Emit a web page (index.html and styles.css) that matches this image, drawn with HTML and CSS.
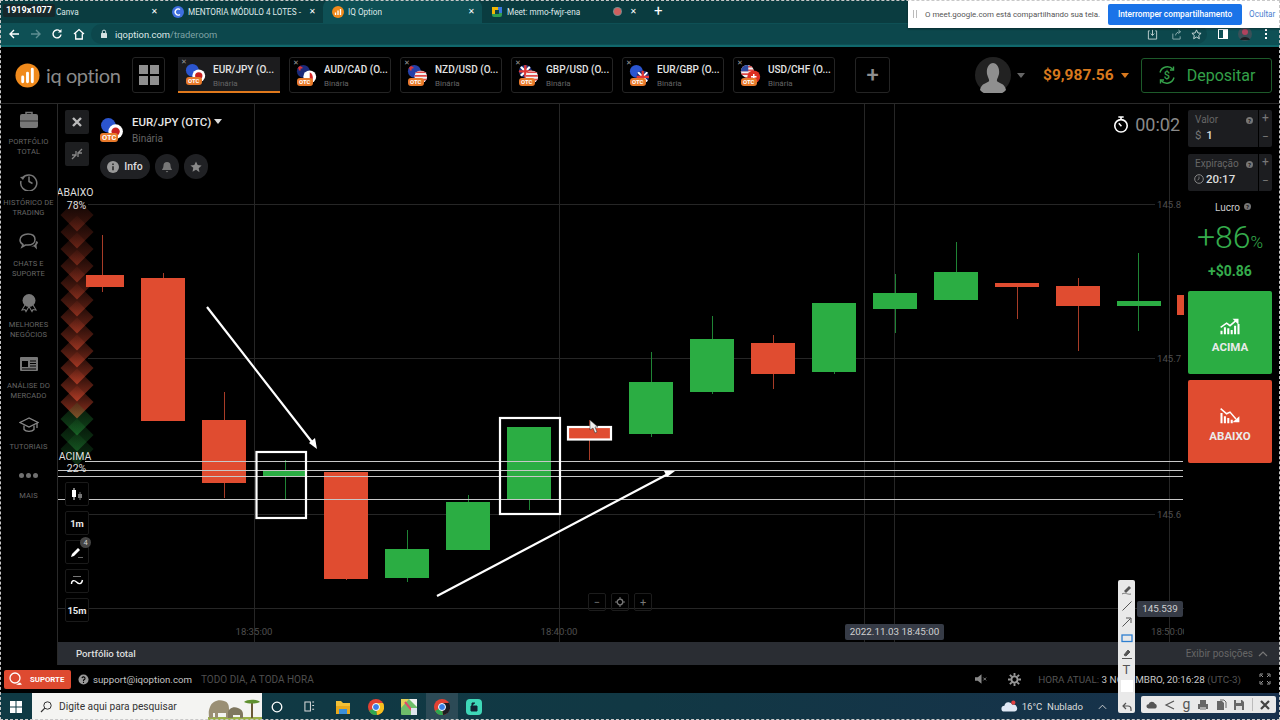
FILE: index.html
```html
<!DOCTYPE html>
<html lang="pt-BR">
<head>
<meta charset="utf-8">
<title>IQ Option</title>
<link rel="stylesheet" href="styles.css">
</head>
<body>
<svg class="defs" width="0" height="0" aria-hidden="true">
  <defs>
    <clipPath id="cb"><circle cx="8" cy="8" r="7"/></clipPath>
    <clipPath id="cf"><circle cx="15" cy="14" r="7"/></clipPath>
    <linearGradient id="gr-red" x1="0" y1="0" x2="0" y2="1"><stop offset="0" stop-color="#e04c30" stop-opacity=".08"/><stop offset="1" stop-color="#e04c30" stop-opacity=".68"/></linearGradient>
    <linearGradient id="gr-green" x1="0" y1="0" x2="0" y2="1"><stop offset="0" stop-color="#2bad43" stop-opacity=".1"/><stop offset="1" stop-color="#2bad43" stop-opacity=".42"/></linearGradient>
    <symbol id="b-eu" viewBox="0 0 24 24"><circle cx="8" cy="8" r="7" fill="#2b55cf"/></symbol>
    <symbol id="b-au" viewBox="0 0 24 24"><g clip-path="url(#cb)"><rect width="16" height="16" fill="#1b2a7a"/><path d="M1 4h6M4 1v6" stroke="#e03636" stroke-width="2"/><circle cx="10" cy="11" r="1" fill="#fff"/></g></symbol>
    <symbol id="b-nz" viewBox="0 0 24 24"><g clip-path="url(#cb)"><rect width="16" height="16" fill="#2440a8"/><path d="M1 4h6M4 1v6" stroke="#e03636" stroke-width="2"/></g></symbol>
    <symbol id="b-gb" viewBox="0 0 24 24"><g clip-path="url(#cb)"><rect width="16" height="16" fill="#24357f"/><path d="M0 0l16 16M16 0L0 16" stroke="#fff" stroke-width="2.4"/><path d="M8 0v16M0 8h16" stroke="#e03636" stroke-width="2.6"/></g></symbol>
    <symbol id="b-us" viewBox="0 0 24 24"><g clip-path="url(#cb)"><rect width="16" height="16" fill="#f0f0f0"/><path d="M0 3h16M0 7h16M0 11h16M0 15h16" stroke="#e04848" stroke-width="1.8"/><rect width="9" height="8" fill="#2d4aa0"/></g></symbol>
    <symbol id="f-jp" viewBox="0 0 24 24"><circle cx="15" cy="14" r="7" fill="#fff"/><circle cx="15" cy="14" r="4" fill="#c92020"/></symbol>
    <symbol id="f-ca" viewBox="0 0 24 24"><circle cx="15" cy="14" r="7" fill="#fff"/><path d="M15 9a7 7 0 0 1 0 12z" fill="#d92626"/></symbol>
    <symbol id="f-us" viewBox="0 0 24 24"><g clip-path="url(#cf)"><rect x="8" y="7" width="14" height="14" fill="#f0f0f0"/><path d="M8 9h14M8 13h14M8 17h14" stroke="#e04848" stroke-width="1.8"/></g></symbol>
    <symbol id="f-gb" viewBox="0 0 24 24"><g clip-path="url(#cf)"><rect x="8" y="7" width="14" height="14" fill="#24357f"/><path d="M8 7l14 14M22 7L8 21" stroke="#fff" stroke-width="2"/><path d="M15 7v14M8 14h14" stroke="#e03636" stroke-width="2.4"/></g></symbol>
    <symbol id="f-ch" viewBox="0 0 24 24"><circle cx="15" cy="14" r="7" fill="#dc2f22"/><path d="M15 11v6M12 14h6" stroke="#fff" stroke-width="1.6"/></symbol>
    <polygon id="dia" points="0,-16.5 16.5,0 0,16.5 -16.5,0"/>
  </defs>
</svg>

<div class="browser">
  <div class="tabstrip">
    <div class="btab btab-a"><span class="btab-title">Canva</span><span class="btab-x">✕</span></div>
    <div class="btab btab-b">
      <svg class="fav" viewBox="0 0 12 12"><circle cx="6" cy="6" r="6" fill="#3f6fe0"/><path d="M8 3.6A3 3 0 1 0 8 8.4" fill="none" stroke="#fff" stroke-width="1.3"/></svg>
      <span class="btab-title">MENTORIA MÓDULO 4 LOTES -</span><span class="btab-x">✕</span>
    </div>
    <div class="btab btab-c btab-on">
      <svg class="fav" viewBox="0 0 12 12"><circle cx="6" cy="6" r="6" fill="#f08a1c"/><path d="M3.5 6.5v2.5M6 4.5v4.5M8.5 3v6" stroke="#fff" stroke-width="1.3"/></svg>
      <span class="btab-title">IQ Option</span><span class="btab-x">✕</span>
    </div>
    <div class="btab btab-d">
      <svg class="fav" viewBox="0 0 12 12"><rect x="1" y="1" width="10" height="10" rx="2" fill="#2f9e4f"/><path d="M1 1h6v3H4v4H1z" fill="#f2b705"/><path d="M7 1h4v6H8V4H7z" fill="#3a78e0"/><rect x="4" y="4" width="4" height="4" fill="#0d4347"/></svg>
      <span class="btab-title">Meet: mmo-fwjr-ena</span><i class="rec"></i><span class="btab-x">✕</span>
    </div>
    <span class="newtab">+</span>
  </div>
  <div class="addrbar">
    <svg class="nav" viewBox="0 0 12 12"><path d="M11 6H2M6 2L2 6l4 4" fill="none" stroke="#fff" stroke-width="1.4"/></svg>
    <svg class="nav nav-dim" viewBox="0 0 12 12"><path d="M1 6h9M6 2l4 4-4 4" fill="none" stroke="#5f8f92" stroke-width="1.4"/></svg>
    <svg class="nav" viewBox="0 0 12 12"><path d="M10 6.500A4 4 0 1 1 8.800 3" fill="none" stroke="#fff" stroke-width="1.4"/><path d="M10.500 1v3.500H7z" fill="#fff"/></svg>
    <svg class="nav" viewBox="0 0 12 12"><path d="M1 6l5-4.500L11 6M2.700 5.500V11h6.600V5.500" fill="none" stroke="#fff" stroke-width="1.3"/></svg>
    <div class="omni">
      <svg class="lock" viewBox="0 0 8 10"><rect x="1" y="4" width="6" height="5" rx=".6" fill="#d4e2e2"/><path d="M2.300 4V2.800a1.700 1.700 0 0 1 3.400 0V4" fill="none" stroke="#d4e2e2"/></svg>
      <span class="url">iqoption.com<span class="url-dim">/traderoom</span></span>
      <div class="omni-right">
        <svg class="act act-first" viewBox="0 0 12 12"><path d="M3 2H1.500v9h9V2H9M6 1v6M4 5l2 2 2-2" fill="none" stroke="#c4d4d4"/></svg>
        <svg class="act" viewBox="0 0 12 12"><path d="M2 5v6h8V8M5 7c0-2 2-4 5-4M8 1l2.500 2L8 5" fill="none" stroke="#8fb0b2"/></svg>
        <svg class="act" viewBox="0 0 12 12"><path d="M6 1l1.500 3.300 3.500.4-2.600 2.400.7 3.500L6 8.800 2.900 10.600l.7-3.500L1 4.700l3.500-.4z" fill="none" stroke="#d4e2e2"/></svg>
      </div>
    </div>
    <svg class="panel-ic" viewBox="0 0 10 10"><rect x=".5" y=".5" width="9" height="9" fill="none" stroke="#fff"/><rect x="5" y="1" width="4" height="8" fill="#fff"/></svg>
    <svg class="prof" viewBox="0 0 14 14"><circle cx="7" cy="7" r="7" fill="#3a5058"/><circle cx="7" cy="5" r="3" fill="#b0435e"/><path d="M2 13c1-4 9-4 10 0" fill="#1b2024"/></svg>
    <span class="kebab"><i></i><i></i><i></i></span>
  </div>
</div>

<header class="apphead">
  <div class="logo">
    <svg class="logo-mark" viewBox="0 0 26 26"><circle cx="13" cy="13" r="12.500" fill="#f08a1c"/><path d="M8 14.500v5M13 10.500v9M18 6.500v13" stroke="#fff" stroke-width="3" stroke-linecap="round"/></svg>
    <span class="logo-text">iq option</span>
  </div>
  <button class="hbtn grid-btn"><i></i><i></i><i></i><i></i></button>
  <nav class="assets">
    <div class="atab atab-on"><span class="atab-x">✕</span><span class="flag"><svg viewBox="0 0 24 24"><use href="#b-eu"/><use href="#f-jp"/></svg><b>OTC</b></span><span class="atab-t"><strong>EUR/JPY (O...</strong><small>Binária</small></span></div>
    <div class="atab"><span class="atab-x">✕</span><span class="flag"><svg viewBox="0 0 24 24"><use href="#b-au"/><use href="#f-ca"/></svg><b>OTC</b></span><span class="atab-t"><strong>AUD/CAD (O...</strong><small>Binária</small></span></div>
    <div class="atab"><span class="atab-x">✕</span><span class="flag"><svg viewBox="0 0 24 24"><use href="#b-nz"/><use href="#f-us"/></svg><b>OTC</b></span><span class="atab-t"><strong>NZD/USD (O...</strong><small>Binária</small></span></div>
    <div class="atab"><span class="atab-x">✕</span><span class="flag"><svg viewBox="0 0 24 24"><use href="#b-gb"/><use href="#f-us"/></svg><b>OTC</b></span><span class="atab-t"><strong>GBP/USD (O...</strong><small>Binária</small></span></div>
    <div class="atab"><span class="atab-x">✕</span><span class="flag"><svg viewBox="0 0 24 24"><use href="#b-eu"/><use href="#f-gb"/></svg><b>OTC</b></span><span class="atab-t"><strong>EUR/GBP (O...</strong><small>Binária</small></span></div>
    <div class="atab"><span class="atab-x">✕</span><span class="flag"><svg viewBox="0 0 24 24"><use href="#b-us"/><use href="#f-ch"/></svg><b>OTC</b></span><span class="atab-t"><strong>USD/CHF (O...</strong><small>Binária</small></span></div>
  </nav>
  <button class="hbtn plus-btn">+</button>
  <svg class="avatar" viewBox="0 0 36 36"><circle cx="18" cy="18" r="18" fill="#222"/><path d="M5 33c1-7 8-7 9-9 .500-1.500-1-3-2-7-1-7 3-11 6-11s7 4 6 11c-1 4-2.500 5.500-2 7 1 2 8 2 9 9a18 18 0 0 1-26 0z" fill="#8f8f8f"/></svg>
  <i class="caret caret-gray"></i>
  <span class="balance">$9,987.56</span>
  <i class="caret caret-org"></i>
  <button class="deposit">
    <svg viewBox="0 0 20 20"><path d="M3 7.500A7.500 7.500 0 0 1 16 4.500M17 12.500A7.500 7.500 0 0 1 4 15.500" fill="none" stroke="#35a04a" stroke-width="1.400"/><path d="M16.500 1.500v3.500H13M3.500 18.500V15H7" fill="none" stroke="#35a04a" stroke-width="1.400"/><text x="10" y="14" text-anchor="middle" class="dep-s">$</text></svg>
    <span>Depositar</span>
  </button>
</header>

<main class="room">
  <aside class="side">
    <div class="side-item">
      <svg viewBox="0 0 20 20"><path d="M7 4V2.500h6V4" fill="none" stroke="#777" stroke-width="1.500"/><rect x="1" y="4" width="18" height="14" rx="2" fill="#777"/><path d="M1 11h18" stroke="#000" stroke-width=".6"/></svg>
      <span>Portfólio total</span>
    </div>
    <div class="side-item">
      <svg viewBox="0 0 20 20"><path d="M3.500 7A8 8 0 1 1 2 10" fill="none" stroke="#777" stroke-width="1.500"/><path d="M1 6l3 3 2-3.500z" fill="#777"/><path d="M10 5.500V10.500l3.500 2" fill="none" stroke="#777" stroke-width="1.500"/></svg>
      <span>Histórico de trading</span>
    </div>
    <div class="side-item">
      <svg viewBox="0 0 20 20"><path d="M9 2C4.500 2 1 4.500 1 8c0 2 1.200 3.500 3 4.500L3 15l3.500-2H9c4 0 7-2 7-5.500S13.500 2 9 2z" fill="none" stroke="#777" stroke-width="1.500"/><path d="M12 14.500l3 0 3 3-.5-4.500c1-1 1.500-2 1.500-3l-2-1c0 3-2 5-5 5.500z" fill="#777"/></svg>
      <span>Chats e suporte</span>
    </div>
    <div class="side-item">
      <svg viewBox="0 0 20 20"><path d="M6 12l-3 5 3-.5 1 2 3-5 3 5 1-2 3 .5-3-5" fill="none" stroke="#777" stroke-width="1.100"/><circle cx="10" cy="7.500" r="6.500" fill="#777"/></svg>
      <span>Melhores negócios</span>
    </div>
    <div class="side-item">
      <svg viewBox="0 0 20 20"><rect x="1" y="3" width="18" height="14" rx="1" fill="#777"/><rect x="3" y="7" width="6" height="6" fill="#000"/><path d="M11 7h6M11 9.500h6M11 12h6M3 15h14" stroke="#000"/></svg>
      <span>Análise do mercado</span>
    </div>
    <div class="side-item">
      <svg viewBox="0 0 20 20"><path d="M10 3L1 7.500l9 4.500 9-4.500z" fill="none" stroke="#888" stroke-width="1.300"/><path d="M5 10.500v4c2 2.500 8 2.500 10 0v-4M18 8v5" fill="none" stroke="#888" stroke-width="1.300"/></svg>
      <span>Tutoriais</span>
    </div>
    <div class="side-item side-more">
      <span class="dots"><i></i><i></i><i></i></span>
      <span>Mais</span>
    </div>
  </aside>

  <section class="chart">
    <svg class="plot" viewBox="58 104 1126 538" width="1126" height="538">
      <g class="grid">
        <path d="M88 204.500H1155M88 358.500H1155M88 514.500H1155M58 608.500H1184"/>
        <path d="M254.500 104V642M559.500 104V642M864.500 104V642M894.500 104V642M1169.500 104V642"/>
      </g>
      <g class="candle-up">
        <path class="wick" d="M285.500 460V500M407.500 530V582M468.500 495V502M529.500 500V510M651.500 352V437M712.500 316V394M834.500 372V374M895.500 274V333M956.500 242V273M1138.500 253V331"/>
        <rect x="263" y="471" width="44" height="5"/><rect x="385" y="549" width="44" height="29"/><rect x="446" y="502" width="44" height="48"/><rect x="507" y="427" width="44" height="73"/><rect x="629" y="382" width="44" height="52"/><rect x="690" y="339" width="44" height="53"/><rect x="812" y="303" width="44" height="69"/><rect x="873" y="293" width="44" height="16"/><rect x="934" y="272" width="44" height="28"/><rect x="1117" y="301" width="44" height="5"/>
      </g>
      <g class="candle-dn">
        <path class="wick" d="M102.500 235V292M163.500 273V279M224.500 392V498M346.500 579V580M589.500 420V460M773.500 335V389M1017.500 283V319M1078.500 278V351"/>
        <rect x="86" y="275" width="38" height="12"/><rect x="141" y="278" width="44" height="143"/><rect x="202" y="420" width="44" height="63"/><rect x="324" y="472" width="44" height="107"/><rect x="569" y="428" width="41" height="11"/><rect x="751" y="343" width="44" height="31"/><rect x="995" y="283" width="44" height="4"/><rect x="1056" y="286" width="44" height="20"/><rect x="1177" y="295" width="7" height="20"/>
      </g>
      <g class="sent-dn">
        <use href="#dia" x="77" y="215" opacity=".45"/><use href="#dia" x="77" y="232" opacity=".5"/><use href="#dia" x="77" y="249" opacity=".55"/><use href="#dia" x="77" y="266" opacity=".6"/><use href="#dia" x="77" y="283" opacity=".65"/><use href="#dia" x="77" y="300" opacity=".7"/><use href="#dia" x="77" y="317" opacity=".75"/><use href="#dia" x="77" y="334" opacity=".8"/><use href="#dia" x="77" y="351" opacity=".85"/><use href="#dia" x="77" y="368" opacity=".9"/><use href="#dia" x="77" y="385" opacity=".95"/><use href="#dia" x="77" y="402"/>
      </g>
      <g class="sent-up">
        <use href="#dia" x="77" y="419"/><use href="#dia" x="77" y="435" opacity=".85"/><use href="#dia" x="77" y="449" opacity=".7"/>
      </g>
      <g class="marks">
        <path d="M85 461.500H1183M58 470.500H1183M58 476.500H1183M58 499.500H1183" class="level"/>
        <rect x="256.500" y="452" width="49.500" height="66"/>
        <rect x="500" y="418" width="60" height="96"/>
        <rect x="568" y="427" width="43" height="12.500"/>
        <path d="M207 307L312 442M437 596L668 474"/>
        <polygon class="tip" points="317,449 309,443 315,438"/>
        <polygon class="tip" points="675,471 664,471 667,477"/>
      </g>
      <polygon class="cursor" points="590,420 590,430 593,428 595,433 597,432 595,427 598,427"/>
      <g class="axis">
        <text x="1157" y="208">145.8</text><text x="1157" y="362">145.7</text><text x="1157" y="518">145.6</text>
        <text x="254" y="635" text-anchor="middle">18:35:00</text><text x="559" y="635" text-anchor="middle">18:40:00</text><text x="1151" y="635">18:50:00</text>
      </g>
      <g class="pct">
        <text x="75" y="196">ABAIXO</text><text x="76.500" y="209">78%</text><text x="75" y="460">ACIMA</text><text x="76.500" y="472">22%</text>
      </g>
    </svg>

    <div class="tools-top">
      <button class="sq"><svg viewBox="0 0 12 12"><path d="M2 2l8 8M10 2l-8 8" stroke="#bbb" stroke-width="2.400"/></svg></button>
      <button class="sq"><svg viewBox="0 0 12 12"><path d="M1 11l4-4M7 5l4-4M5 3v4H1M7 9V5h4" fill="none" stroke="#888" stroke-width="1.300"/></svg></button>
    </div>

    <div class="asset">
      <div class="asset-row">
        <span class="flag flag-lg"><svg viewBox="0 0 24 24"><use href="#b-eu"/><use href="#f-jp"/></svg><b>OTC</b></span>
        <div class="asset-t"><strong>EUR/JPY (OTC)<i class="caret caret-w"></i></strong><small>Binária</small></div>
      </div>
      <div class="pills">
        <span class="pill pill-info"><svg viewBox="0 0 12 12"><circle cx="6" cy="6" r="6" fill="#999"/><path d="M6 5.200v4M6 2.500v1.400" stroke="#222" stroke-width="1.500"/></svg>Info</span>
        <span class="pill pill-ic"><svg viewBox="0 0 12 12"><path d="M6 1a3.500 3.500 0 0 1 3.500 3.500c0 3 1.500 3.500 1.500 4.500H1c0-1 1.500-1.500 1.500-4.500A3.500 3.500 0 0 1 6 1zM4.700 10h2.600L6 11.500z" fill="#777"/></svg></span>
        <span class="pill pill-ic"><svg viewBox="0 0 12 12"><path d="M6 .5l1.700 3.600 3.900.5-2.900 2.700.8 3.900L6 8.800l-3.500 1.900.8-3.900L.4 4.600l3.900-.5z" fill="#888"/></svg></span>
      </div>
    </div>

    <div class="timer">
      <svg viewBox="0 0 18 20"><path d="M6 1.500h6M9 2v2" stroke="#fff" stroke-width="1.800"/><circle cx="9" cy="11.500" r="7" fill="none" stroke="#fff" stroke-width="1.800"/><path d="M6.500 8.500L9.500 12" stroke="#fff" stroke-width="1.600"/></svg>
      <span>00:02</span>
    </div>

    <div class="tools-bottom">
      <button class="sq sq-line"><svg viewBox="0 0 14 14"><path d="M4 1v12" stroke="#fff"/><rect x="2" y="3" width="4" height="7" fill="#fff"/><path d="M10 5v8" stroke="#777"/><rect x="8" y="7" width="4" height="4" fill="#777"/></svg></button>
      <button class="sq sq-line sq-txt">1m</button>
      <button class="sq sq-line sq-badge"><svg viewBox="0 0 14 14"><path d="M1 12l1-3 6-6 2 2-6 6z" fill="#fff"/><path d="M8 12.500h5" stroke="#666"/></svg><em>4</em></button>
      <button class="sq sq-line"><svg viewBox="0 0 14 14"><path d="M3 2.500h8" stroke="#777"/><path d="M1.500 10c0-4 3-4 5-2s5 3 6-2" fill="none" stroke="#fff" stroke-width="1.400"/></svg></button>
      <button class="sq sq-line sq-txt">15m</button>
    </div>

    <div class="zoomctl"><span>−</span><span><svg viewBox="0 0 10 10"><circle cx="5" cy="5" r="2.800" fill="none" stroke="#777" stroke-width="1.300"/><path d="M5 0v2M5 8v2M0 5h2M8 5h2" stroke="#777"/></svg></span><span>+</span></div>
    <span class="chip chip-date">2022.11.03 18:45:00</span>
    <span class="chip chip-price">145.539</span>
  </section>

  <aside class="trade">
    <div class="field">
      <div class="field-main"><div class="field-l">Valor<i class="hint">?</i></div><div class="field-v"><span class="dim">$</span> 1</div></div>
      <div class="step"><span>+</span><span>−</span></div>
    </div>
    <div class="field">
      <div class="field-main"><div class="field-l">Expiração<i class="hint">?</i></div><div class="field-v field-v-t"><svg viewBox="0 0 10 10"><circle cx="5" cy="5" r="4.300" fill="none" stroke="#888"/><path d="M5 2.500V5l-1.500 1" fill="none" stroke="#888" stroke-width=".8"/></svg>20:17</div></div>
      <div class="step"><span>+</span><span>−</span></div>
    </div>
    <div class="lucro">Lucro<i class="hint">?</i></div>
    <div class="pay">+86<small>%</small></div>
    <div class="gain">+$0.86</div>
    <button class="call">
      <svg viewBox="0 0 24 20"><path d="M1 11L8 6l4 3 7-6" fill="none" stroke="#fff" stroke-width="1.800"/><path d="M15 1h7v7z" fill="#fff"/><path d="M2 19v-4M6 19v-8M10 19v-7M14 19v-5M18 19V9M22 19V7" stroke="#fff" stroke-width="2.400"/></svg>
      <span>ACIMA</span>
    </button>
    <button class="put">
      <svg viewBox="0 0 24 20"><path d="M1 2l7 6 4-2 7 8" fill="none" stroke="#fff" stroke-width="1.800"/><path d="M15 18h8v-7z" fill="#fff"/><path d="M2 19V7M6 19v-8M10 19v-6M14 19v-4" stroke="#fff" stroke-width="2.400"/></svg>
      <span>ABAIXO</span>
    </button>
  </aside>

  <div class="portfolio">
    <strong>Portfólio total</strong>
    <span class="expos">Exibir posições <svg viewBox="0 0 10 6"><path d="M1 5l4-4 4 4" fill="none" stroke="#777" stroke-width="1.200"/></svg></span>
  </div>
</main>

<footer class="foot">
  <button class="support">
    <svg viewBox="0 0 14 14"><circle cx="6" cy="6" r="5" fill="none" stroke="#fff" stroke-width="1.300"/><path d="M7 12.500c2 .5 4 .5 6 0l-2-2z" fill="#fff"/></svg>
    <span>SUPORTE</span>
  </button>
  <svg class="q" viewBox="0 0 12 12"><circle cx="6" cy="6" r="5.500" fill="#999"/><path d="M4.300 4.500A1.700 1.700 0 1 1 6 6.500V7.500M6 8.500v1.300" fill="none" stroke="#000" stroke-width="1.200"/></svg>
  <span class="mail">support@iqoption.com</span>
  <span class="allday">TODO DIA, A TODA HORA</span>
  <div class="foot-right">
    <svg class="mute" viewBox="0 0 14 12"><path d="M0 4h3l4-3v10L3 8H0z" fill="#888"/><path d="M9 4.500l3 3M12 4.500l-3 3" stroke="#888"/></svg>
    <svg class="gear" viewBox="0 0 14 14"><circle cx="7" cy="7" r="3.300" fill="none" stroke="#999" stroke-width="2"/><path d="M7 0v3M7 11v3M0 7h3M11 7h3M2 2l2 2M10 10l2 2M12 2l-2 2M4 10l-2 2" stroke="#999" stroke-width="2"/></svg>
    <span class="now"><span class="now-l">HORA ATUAL:</span> 3 NOVEMBRO, 20:16:28 <span class="now-l">(UTC-3)</span></span>
    <svg class="full" viewBox="0 0 12 12"><path d="M1 4V1h3M8 1h3v3M1 8v3h3M8 11h3V8M2 2l2 2M10 2L8 4M2 10l2-2M10 10L8 8" fill="none" stroke="#999"/></svg>
  </div>
</footer>

<div class="taskbar">
  <svg class="win" viewBox="0 0 12 12"><path d="M0 0h5.500v5.500H0zM6.500 0H12v5.500H6.500zM0 6.500h5.500V12H0zM6.500 6.500H12V12H6.500z" fill="#fff"/></svg>
  <div class="search">
    <svg class="lens" viewBox="0 0 12 12"><circle cx="7.500" cy="4.500" r="3.700" fill="none" stroke="#333"/><path d="M4.800 7.200L1 11" stroke="#333" stroke-width="1.200"/></svg>
    <span>Digite aqui para pesquisar</span>
    <svg class="ele" viewBox="0 0 54 24"><rect y="21" width="54" height="3" fill="#9bb04a"/><path d="M1 22c0-5-1-6 1-11 2-6 9-8 14-6 4 1 5 4 5 8v9h-3v-5h-8v5H7v-5H5v5z" fill="#9a8f74"/><path d="M20 22v-5c0-4 5-7 10-5 3 1 5 3 5 6v4h-3v-3h-7v3z" fill="#7f775f"/><path d="M44 6v16" stroke="#6a5a36" stroke-width="2"/><path d="M36 6c3-3 13-3 16 0-4 2-12 2-16 0z" fill="#5f9030"/></svg>
  </div>
  <svg class="tk tk-cortana" viewBox="0 0 12 12"><circle cx="6" cy="6" r="4.800" fill="none" stroke="#fff" stroke-width="1.300"/></svg>
  <svg class="tk tk-view" viewBox="0 0 12 12"><path d="M1 1h6v10H1zM9 1h2M9 5h2M9 9h2" fill="none" stroke="#ddd" stroke-width="1.100"/></svg>
  <svg class="tk tk-app" viewBox="0 0 16 16"><path d="M1 2h5l2 2h7v11H1z" fill="#f2c037"/><rect x="1" y="7" width="14" height="8" fill="#e8a91c"/><rect x="4" y="10" width="8" height="5" fill="#3c8fd8"/></svg>
  <svg class="tk tk-app" viewBox="0 0 16 16"><circle cx="8" cy="8" r="8" fill="#e34133"/><path d="M8 8L1 12a8 8 0 0 0 8 4z" fill="#2fa84f"/><path d="M8 4h7a8 8 0 0 1-6 12z" fill="#f7c11e"/><circle cx="8" cy="8" r="3.500" fill="#3a7fe6" stroke="#fff"/></svg>
  <svg class="tk tk-app" viewBox="0 0 16 16"><rect width="16" height="16" rx="1" fill="#6fbf6a"/><path d="M0 0h8L0 9z" fill="#e6d25a"/><path d="M8 0h8v8z" fill="#f2f2f2"/><path d="M4 3l9 11" stroke="#e04a6a" stroke-width="2"/><path d="M10 9h6v7h-6z" fill="#dfe6ee"/></svg>
  <span class="tk-active"><svg class="tk tk-app" viewBox="0 0 16 16"><circle cx="8" cy="8" r="8" fill="#e34133"/><path d="M8 8L1 12a8 8 0 0 0 8 4z" fill="#2fa84f"/><path d="M8 4h7a8 8 0 0 1-6 12z" fill="#1c1c22"/><circle cx="8" cy="8" r="3.500" fill="#3a7fe6" stroke="#fff"/></svg></span>
  <svg class="tk tk-app" viewBox="0 0 16 16"><rect width="16" height="16" rx="4" fill="#3fd8b8"/><path d="M5 7h6v5H5zM6 7V4h3" fill="#123" stroke="#123"/></svg>
  <div class="tray">
    <svg class="cloud" viewBox="0 0 20 14"><path d="M4 13a3.500 3.500 0 0 1 0-7 5 5 0 0 1 9.500-1A4 4 0 0 1 16 13z" fill="#dfe8f5"/><circle cx="14.500" cy="2.500" r="2.500" fill="#e04040"/></svg>
    <span class="temp">16°C&nbsp; Nublado</span>
    <svg class="chev" viewBox="0 0 10 6"><path d="M1 5l4-4 4 4" fill="none" stroke="#ddd"/></svg>
  </div>
</div>

<span class="res">1919x1077</span>

<aside class="sharebar">
  <span class="grip"></span>
  <span class="share-t">O meet.google.com está compartilhando sua tela.</span>
  <button class="stop">Interromper compartilhamento</button>
  <span class="hide">Ocultar</span>
</aside>

<div class="annot-v">
  <svg viewBox="0 0 12 12"><path d="M3 7l5-5 2 2-5 5z" fill="#555"/><path d="M1 10c3-2 6 1 9 0" fill="none" stroke="#777"/></svg>
  <svg viewBox="0 0 12 12"><path d="M1.500 10.500l9-9" stroke="#555"/></svg>
  <svg viewBox="0 0 12 12"><path d="M1.500 10.500l8-8M5 2h5v5" fill="none" stroke="#555"/></svg>
  <svg viewBox="0 0 12 12"><rect x="1" y="3" width="10" height="6.500" fill="none" stroke="#2f7fd0" stroke-width="1.300"/></svg>
  <svg viewBox="0 0 12 12"><path d="M3 7l4-5 2 2-4 4zM1 10.500h10" fill="#555" stroke="#555"/></svg>
  <span class="annot-t">T</span>
  <span class="annot-sw"></span>
  <svg class="annot-undo" viewBox="0 0 12 12"><path d="M2 5h5a3 3 0 0 1 3 3v2M5 2L2 5l3 3" fill="none" stroke="#555" stroke-width="1.200"/></svg>
</div>
<div class="annot-h">
  <svg viewBox="0 0 14 12"><path d="M3 10a2.500 2.500 0 0 1 0-5 4 4 0 0 1 7.500-.5A3 3 0 0 1 11 10z" fill="#555"/></svg>
  <svg viewBox="0 0 12 12"><path d="M10 2L2 6l8 4" fill="none" stroke="#555" stroke-width="1.200"/></svg>
  <span class="annot-g">g</span>
  <svg viewBox="0 0 12 12"><path d="M3 1h6v4H3zM1 5h10v5H1z" fill="#666"/><path d="M3 8h6v3H3z" fill="#aaa"/></svg>
  <svg viewBox="0 0 12 12"><path d="M2 2h5l2 2v7H2z" fill="#666"/><path d="M5 1h4l2 2v6" fill="none" stroke="#666"/></svg>
  <svg viewBox="0 0 12 12"><path d="M1 1h8l2 2v8H1z" fill="#666"/><path d="M3 1h5v3H3zM3 7h6v4H3z" fill="#ddd"/></svg>
  <i class="annot-sep"></i>
  <svg viewBox="0 0 12 12"><path d="M2 2l8 8M10 2l-8 8" stroke="#444" stroke-width="2.200"/></svg>
</div>
<div class="capture"></div>
</body>
</html>
```

FILE: styles.css
```css
* { box-sizing: border-box; }
html, body { margin: 0; padding: 0; }
body {
  width: 1280px; height: 720px; overflow: hidden; position: relative;
  background: #000; color: #ddd;
  font-family: Roboto, "Liberation Sans", sans-serif;
}
button { font-family: inherit; border: 0; padding: 0; background: none; color: inherit; }
.defs { position: absolute; }
i, em { font-style: normal; }

/* Browser chrome */
.tabstrip { height: 23px; background: #0a3c40; display: flex; align-items: stretch; font-size: 8.200px; color: #dfe9e9; }
.btab { display: flex; align-items: center; width: 160px; padding: 0 5px 0 10px; gap: 4px; position: relative; }
.btab-a { width: 165px; padding-left: 56px; }
.btab-b { width: 158px; padding-left: 7px; }
.btab-c { width: 159px; padding-left: 9px; }
.btab-d { width: 159px; padding: 0 2px 0 9px; }
.btab-on { background: #0e5055; border-radius: 7px 7px 0 0; }
.fav { width: 12px; height: 12px; flex: none; }
.btab-title { flex: 1; white-space: nowrap; }
.btab-x { font-size: 8px; color: #fff; width: 12px; text-align: center; flex: none; }
.rec { width: 7px; height: 7px; border-radius: 50%; background: #d0605f; box-shadow: 0 0 0 1px #7a8a8a; margin-right: 2px; flex: none; }
.newtab { font-size: 15px; color: #fff; margin-left: 13px; line-height: 22px; }
.addrbar { height: 24px; background: #0e5055; border-bottom: 2px solid #11686c; display: flex; align-items: center; padding-left: 8px; }
.nav { width: 12px; height: 12px; margin-right: 10px; flex: none; }
.nav-dim { margin-right: 9px; }
.omni { display: flex; align-items: center; width: 1116px; margin-left: -4px; height: 20px; background: #0c474c; border-radius: 10px; padding-left: 9px; }
.lock { width: 8px; height: 10px; margin-right: 7px; }
.url { font-size: 9.400px; color: #dfe9e9; }
.url-dim { color: #7fa3a5; }
.omni-right { margin-left: auto; display: flex; gap: 9px; padding-right: 5px; }
.act { width: 11px; height: 11px; }
.act-first { margin-right: 4px; }
.panel-ic { width: 10px; height: 10px; margin-left: 11px; }
.prof { width: 14px; height: 14px; margin-left: 10px; }
.kebab { display: flex; flex-direction: column; gap: 2px; margin-left: 13px; }
.kebab i { width: 2px; height: 2px; background: #fff; }

/* App header */
.apphead { height: 57px; display: flex; align-items: center; padding-left: 15px; border-bottom: 1px solid #2a2a2a; }
.logo { width: 117px; display: flex; align-items: center; gap: 6px; flex: none; }
.logo-mark { width: 25px; height: 25px; }
.logo-text { font-family: Lato, sans-serif; font-size: 20px; color: #8a8a8a; letter-spacing: -.4px; white-space: nowrap; }
.hbtn { height: 36px; width: 33px; border: 1px solid #242424; border-radius: 3px; flex: none; }
.grid-btn { display: grid; grid-template-columns: 9px 9px; gap: 2px; align-content: center; justify-content: center; }
.grid-btn i { height: 9px; background: #8f8f8f; }
.assets { display: flex; gap: 9px; margin-left: 13px; }
.atab { width: 102px; height: 36px; border: 1px solid #242424; border-radius: 3px; display: flex; align-items: center; padding-left: 6px; gap: 6px; position: relative; }
.atab-on { background: #1c1c1e; border: 0; border-bottom: 2px solid #e0791c; border-radius: 0; padding-left: 7px; }
.atab-x { position: absolute; left: 3px; top: 1px; font-size: 7px; color: #999; }
.flag { position: relative; width: 22px; height: 22px; flex: none; display: block; }
.flag svg { width: 22px; height: 22px; display: block; }
.flag b { position: absolute; left: 1px; bottom: 0; background: #e8792a; color: #fff; font-size: 6px; line-height: 8px; font-weight: 700; padding: 0 2px; border-radius: 3px; }
.atab-t { display: flex; flex-direction: column; min-width: 0; padding-top: 2px; }
.atab-on .atab-t { padding-top: 4px; }
.atab-t strong { font-size: 10px; font-weight: 500; color: #e4e4e4; white-space: nowrap; line-height: 12px; }
.atab-t small { font-size: 8px; color: #666; line-height: 10px; margin-top: 3px; }
.plus-btn { width: 35px; margin-left: 20px; font-size: 22px; line-height: 30px; color: #8f8f8f; font-weight: 500; }
.avatar { width: 36px; height: 36px; margin-left: 85px; flex: none; }
.caret { display: inline-block; width: 0; height: 0; border: 4px solid transparent; border-top: 5px solid #666; border-bottom: 0; flex: none; }
.caret-gray { margin-left: 6px; }
.caret-org { border-top-color: #d9791e; margin-left: 7px; }
.caret-w { border-top-color: #ddd; margin-left: 3px; vertical-align: 2px; }
.balance { color: #d9791e; font-size: 15.500px; font-weight: 700; margin-left: 18px; white-space: nowrap; }
.deposit { width: 131px; height: 35px; border: 1px solid #1d5a2a; border-radius: 3px; margin-left: 12px; display: flex; align-items: center; justify-content: center; gap: 10px; color: #33a049; font-size: 16px; flex: none; }
.deposit svg { width: 20px; height: 20px; }
.dep-s { font-size: 11px; fill: #35a04a; font-weight: 500; }

/* Main room */
.room { height: 561px; display: grid; grid-template-columns: 58px 1126px 96px; grid-template-rows: 538px 23px; }
.side { grid-row: 1 / 3; border-right: 1px solid #2a2a2a; padding-top: 6px; display: flex; flex-direction: column; }
.side-item { height: 61px; display: flex; flex-direction: column; align-items: center; gap: 7px; text-align: center; flex: none; }
.side-item svg { width: 20px; height: 20px; flex: none; }
.side-item span { font-size: 7.500px; line-height: 10px; color: #666; text-transform: uppercase; width: 54px; letter-spacing: .1px; }
.side-more { gap: 13px; }
.side-item .dots { display: flex; gap: 2px; justify-content: center; height: 5px; margin-top: -3px; flex: none; }
.dots i { width: 5px; height: 5px; border-radius: 50%; background: #707070; }

.chart { position: relative; overflow: hidden; }
.plot { position: absolute; left: 0; top: 0; display: block; }
.grid path { stroke: #262626; stroke-width: 1; fill: none; }
.candle-up rect { fill: #2bad43; }
.candle-up .wick { stroke: #1f8435; fill: none; }
.candle-dn rect { fill: #e04c30; }
.candle-dn .wick { stroke: #a83c27; fill: none; }
.sent-dn { fill: url(#gr-red); }
.sent-up { fill: url(#gr-green); }
.marks rect, .marks path { fill: none; stroke: #fff; stroke-width: 2.200; }
.marks .level { stroke: #c8c8c8; stroke-width: 1.200; }
.marks .tip { fill: #fff; stroke: none; }
.cursor { fill: #eee; stroke: #222; stroke-width: .5; }
.axis text { font-family: Roboto, sans-serif; font-size: 9.600px; fill: #4f4f4f; }
.pct text { font-family: Roboto, sans-serif; font-size: 10.500px; fill: #dedede; text-anchor: middle; }

.sq { width: 24px; height: 24px; background: #1d1e20; border-radius: 2px; display: flex; align-items: center; justify-content: center; }
.sq svg { width: 12px; height: 12px; }
.tools-top { position: absolute; left: 7px; top: 6px; display: flex; flex-direction: column; gap: 8px; }
.tools-bottom { position: absolute; left: 7px; top: 378px; display: flex; flex-direction: column; gap: 5px; }
.sq-line { background: #000; border: 1px solid #1a1a1a; }
.sq-line svg { width: 14px; height: 14px; }
.sq-txt { font-size: 9.500px; font-weight: 700; color: #e8e8e8; }
.sq-badge { position: relative; }
.sq-badge em { position: absolute; right: -3px; top: -4px; width: 11px; height: 11px; background: #444; border-radius: 50%; font-size: 7.500px; line-height: 11px; text-align: center; color: #ccc; }

.asset { position: absolute; left: 42px; top: 11px; }
.asset-row { display: flex; gap: 7px; }
.flag-lg { width: 25px; height: 26px; margin-top: 2px; }
.flag-lg svg { width: 25px; height: 25px; }
.flag-lg b { left: 0; bottom: 1px; font-size: 7.500px; line-height: 9px; padding: 0 2px; }
.asset-t { display: flex; flex-direction: column; }
.asset-t strong { font-size: 11.500px; font-weight: 500; color: #e6e6e6; line-height: 14px; white-space: nowrap; }
.asset-t small { font-size: 10px; color: #666; line-height: 12px; margin-top: 4px; }
.pills { display: flex; gap: 5px; margin-top: 9px; }
.pill { height: 25px; background: #202124; border-radius: 13px; display: flex; align-items: center; justify-content: center; }
.pill-info { width: 50px; gap: 5px; font-size: 10.500px; font-weight: 500; color: #ddd; }
.pill-info svg { width: 12px; height: 12px; }
.pill-ic { width: 24px; }
.pill-ic svg { width: 12px; height: 12px; }

.timer { position: absolute; right: 4px; top: 10px; display: flex; align-items: center; gap: 6px; }
.timer svg { width: 16px; height: 19px; }
.timer span { font-size: 18px; color: #8a8a8a; }

.zoomctl { position: absolute; left: 530px; top: 489px; display: flex; gap: 5px; }
.zoomctl span { width: 18px; height: 18px; border: 1px solid #1c1c1c; border-radius: 2px; font-size: 11px; line-height: 15px; color: #777; text-align: center; display: flex; align-items: center; justify-content: center; }
.zoomctl svg { width: 10px; height: 10px; }
.chip { position: absolute; background: #363b46; color: #d0d0d0; font-size: 9.800px; line-height: 16px; border-radius: 2px; text-align: center; }
.chip-date { left: 787px; top: 520px; width: 99px; }
.chip-price { left: 1079px; top: 497px; width: 46px; }

/* Right trade panel */
.trade { padding: 6px 8px 0 4px; display: flex; flex-direction: column; }
.field { height: 37px; background: #1c1d20; border-radius: 2px; margin-bottom: 7px; display: flex; flex: none; }
.field-main { flex: 1; padding: 3px 0 0 7px; min-width: 0; }
.field-l { font-size: 10px; color: #666; display: flex; justify-content: space-between; align-items: center; padding-right: 5px; line-height: 14px; }
.field-v { font-size: 11.500px; font-weight: 500; color: #ddd; line-height: 16px; }
.field-v .dim { color: #777; font-weight: 400; margin-right: 2px; }
.field-v-t { display: flex; align-items: center; gap: 2px; margin-left: -1px; }
.field-v-t svg { width: 10px; height: 10px; }
.step { width: 14px; display: flex; flex-direction: column; border-left: 1px solid #000; }
.step span { height: 18.500px; font-size: 12px; line-height: 17px; color: #777; text-align: center; }
.hint { display: inline-block; width: 7px; height: 7px; border-radius: 50%; background: #777; color: #111; font-size: 6px; line-height: 7px; text-align: center; font-weight: 700; }
.lucro { height: 16px; margin-top: 2px; padding-left: 6px; font-size: 10px; color: #ccc; text-align: center; line-height: 16px; }
.lucro .hint { margin-left: 4px; vertical-align: 2px; }
.pay { height: 44px; margin-top: -1px; text-align: center; color: #35ac4c; font-size: 32px; font-weight: 300; line-height: 44px; white-space: nowrap; }
.pay small { font-size: 17px; }
.gain { height: 24px; text-align: center; color: #35ac4c; font-size: 14px; font-weight: 700; line-height: 24px; }
.call, .put { height: 83px; width: 84px; border-radius: 2px; color: #eaeaea; font-size: 11.500px; font-weight: 700; display: flex; flex-direction: column; align-items: center; justify-content: center; gap: 5px; padding-top: 7px; flex: none; }
.call { background: #2bad43; margin-top: 8px; margin-bottom: 6px; }
.put { background: #e04c30; }
.call svg, .put svg { width: 22px; height: 17px; }
.portfolio { grid-column: 2 / 4; background: #2a2d33; display: flex; align-items: center; justify-content: space-between; padding: 0 12px 0 18px; }
.portfolio strong { font-size: 9.700px; font-weight: 500; color: #ddd; }
.expos { font-size: 10px; color: #666; display: flex; align-items: center; gap: 5px; }
.expos svg { width: 10px; height: 6px; }

/* Footer */
.foot { height: 28px; display: flex; align-items: center; padding-left: 4px; }
.support { width: 67px; height: 19px; background: #de4a30; border-radius: 2px; display: flex; align-items: center; padding-left: 5px; gap: 7px; font-size: 7.800px; font-weight: 700; color: #fff; flex: none; }
.support svg { width: 14px; height: 14px; }
.q { width: 11px; height: 11px; margin-left: 7px; }
.mail { font-size: 9.700px; color: #c4c4c4; margin-left: 4px; white-space: nowrap; }
.allday { font-size: 10px; color: #4f4f4f; margin-left: 9px; white-space: nowrap; }
.foot-right { margin-left: auto; display: flex; align-items: center; padding-right: 9px; }
.mute { width: 13px; height: 12px; }
.gear { width: 13px; height: 13px; margin-left: 20px; }
.now { font-size: 9.900px; color: #c8c8c8; margin-left: 17px; white-space: nowrap; }
.now-l { color: #555; }
.full { width: 12px; height: 12px; margin-left: 18px; }

/* Taskbar */
.taskbar { height: 27px; background: linear-gradient(90deg, #0f3a44, #113844 50%, #18304c); display: flex; align-items: center; padding-left: 10px; }
.win { width: 12px; height: 12px; flex: none; }
.search { width: 230px; height: 27px; background: #f4f4f2; margin-left: 10px; display: flex; align-items: center; padding-left: 8px; position: relative; flex: none; }
.lens { width: 12px; height: 12px; }
.search span { font-size: 10.200px; color: #333; margin-left: 7px; white-space: nowrap; }
.ele { position: absolute; right: 0; bottom: 0; width: 54px; height: 24px; }
.tk { flex: none; }
.tk-cortana { width: 12px; height: 12px; margin-left: 9px; }
.tk-view { width: 11px; height: 11px; margin-left: 21px; }
.tk-app { width: 16px; height: 16px; margin-left: 17px; }
.tk-view + .tk-app { margin-left: 20px; }
.tk-active { width: 32px; height: 27px; margin-left: 9px; background: #2c4a56; display: flex; align-items: center; justify-content: center; flex: none; }
.tk-active .tk-app { margin: 0; }
.tk-active + .tk-app { margin-left: 8px; }
.tray { margin-left: auto; display: flex; align-items: center; padding-right: 173px; }
.cloud { width: 17px; height: 13px; }
.temp { font-size: 9.600px; color: #ddd; margin-left: 4px; white-space: nowrap; }
.chev { width: 9px; height: 6px; margin-left: 15px; }

/* Capture overlays */
.res { position: absolute; left: 3px; top: 4px; background: #17282b; color: #fff; font-size: 9px; font-weight: 700; line-height: 13px; padding: 0 3px; border-radius: 2px; }
.sharebar { position: absolute; left: 908px; top: 0; width: 372px; height: 28px; background: #fff; display: flex; align-items: center; padding-left: 5px; box-shadow: 0 1px 2px rgba(0,0,0,.4); }
.grip { width: 4px; height: 8px; border-left: 1px solid #bbb; border-right: 1px solid #bbb; flex: none; }
.share-t { font-size: 7.900px; color: #555; margin-left: 8px; white-space: nowrap; width: 175px; flex: none; }
.stop { width: 134px; height: 21px; background: #1a73e8; color: #fff; border-radius: 2px; font-size: 8.300px; font-weight: 500; margin-left: 8px; white-space: nowrap; flex: none; }
.hide { font-size: 8.200px; color: #4a80d0; margin-left: 7px; white-space: nowrap; }
.annot-v { position: absolute; left: 1118px; top: 580px; width: 17px; height: 133px; background: #e9e9e9; border-radius: 2px; display: flex; flex-direction: column; align-items: center; padding-top: 4px; gap: 4px; }
.annot-v svg { width: 12px; height: 12px; flex: none; }
.annot-t { font-size: 13px; line-height: 12px; color: #555; }
.annot-sw { width: 12px; height: 12px; background: #fff; }
.annot-undo { margin-top: 5px; }
.annot-h { position: absolute; left: 1141px; top: 696px; width: 135px; height: 17px; background: #e9e9e9; border-radius: 2px; display: flex; align-items: center; justify-content: space-between; padding: 0 5px; }
.annot-h svg { width: 12px; height: 12px; flex: none; }
.annot-g { font-size: 14px; line-height: 13px; color: #555; }
.annot-sep { width: 1px; height: 13px; background: #bbb; }
.capture { position: absolute; inset: 0; border: 1px dashed #c8c8c8; pointer-events: none; }
```
